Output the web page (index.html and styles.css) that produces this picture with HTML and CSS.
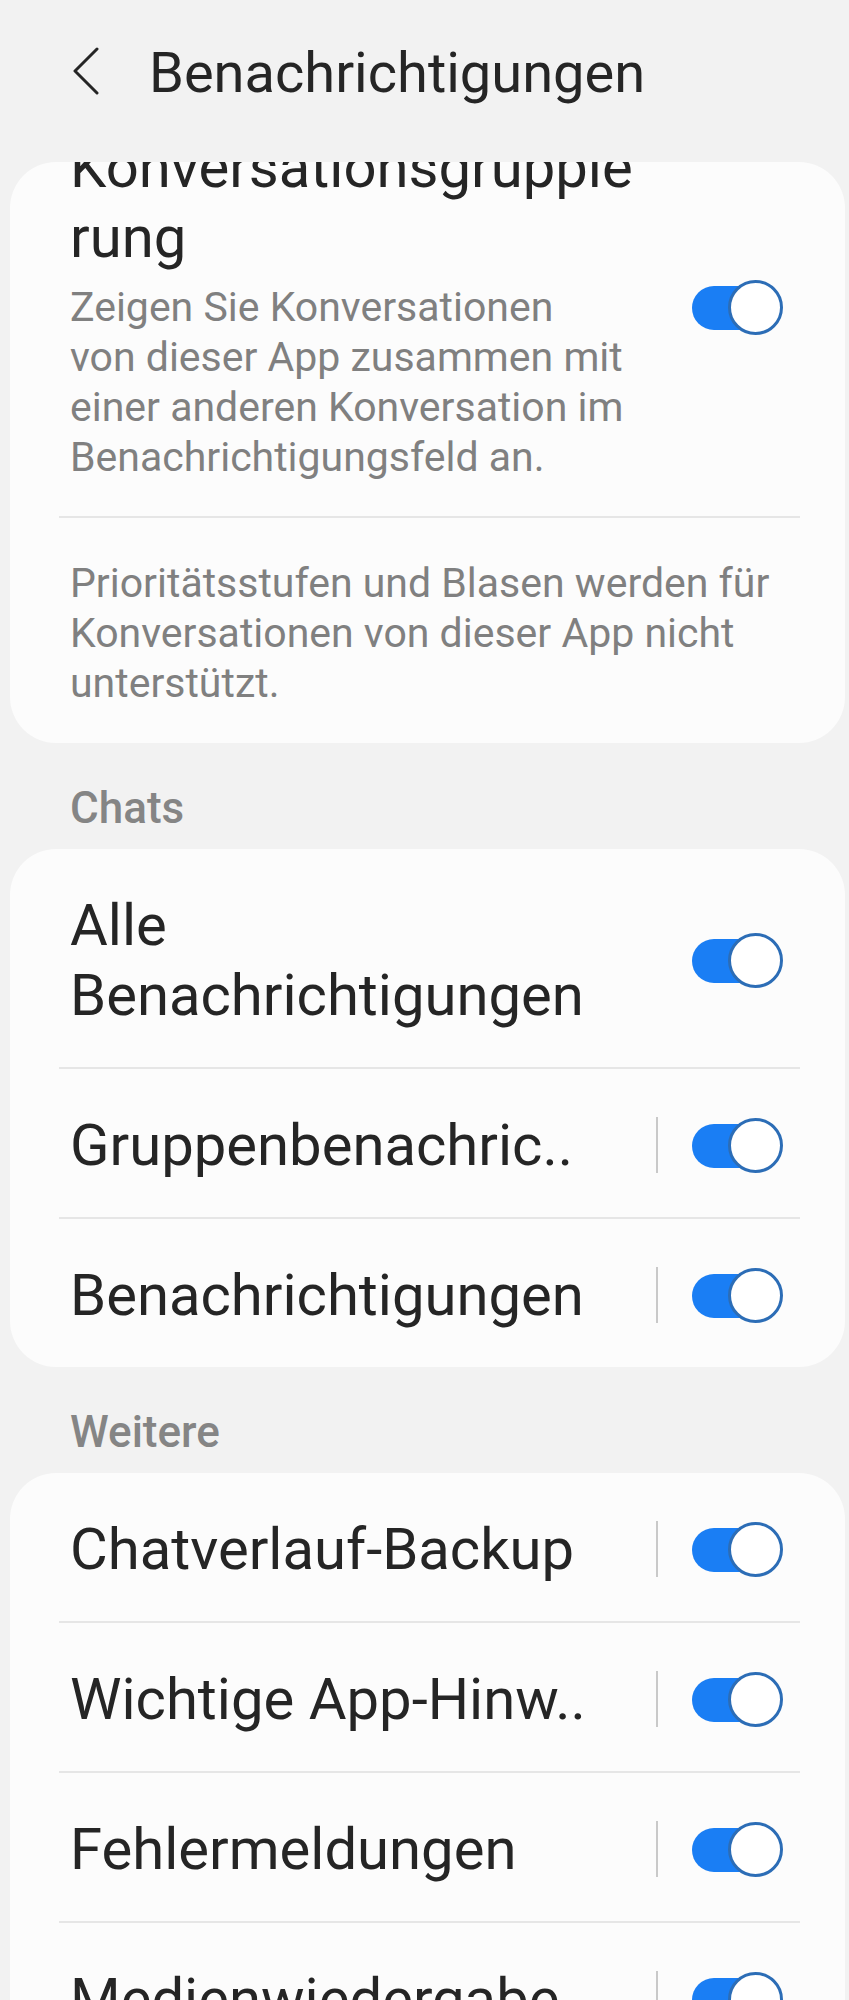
FILE: index.html
```html
<!DOCTYPE html>
<html>
<head>
    <title>Benachrichtigungen</title>
    <link rel="stylesheet" href="styles.css">
</head>
<body>
    <div id="screen">
        <header class="appbar">
            <svg class="back" width="28" height="48" viewBox="0 0 28 48">
                <polyline points="25,2 3,24 25,46" fill="none" stroke="#252525" stroke-width="3" stroke-linecap="round" stroke-linejoin="round"/>
            </svg>
            <h1>Benachrichtigungen</h1>
        </header>

        <section class="card card-first">
            <div class="row row-scrolled">
                <div class="row-text">
                    <div class="title">Konversationsgruppie<br>rung</div>
                    <div class="summary">Zeigen Sie Konversationen<br>von dieser App zusammen mit<br>einer anderen Konversation im<br>Benachrichtigungsfeld an.</div>
                </div>
                <div class="switch"><span class="track"></span><span class="knob"></span></div>
            </div>
            <div class="divider"></div>
            <p class="note">Prioritätsstufen und Blasen werden für<br>Konversationen von dieser App nicht<br>unterstützt.</p>
        </section>

        <h2 class="section-title">Chats</h2>
        <section class="card">
            <div class="row">
                <div class="row-text"><div class="title">Alle<br>Benachrichtigungen</div></div>
                <div class="switch"><span class="track"></span><span class="knob"></span></div>
            </div>
            <div class="divider"></div>
            <div class="row">
                <div class="row-text"><div class="title">Gruppenbenachric..</div></div>
                <span class="vline"></span>
                <div class="switch"><span class="track"></span><span class="knob"></span></div>
            </div>
            <div class="divider"></div>
            <div class="row">
                <div class="row-text"><div class="title">Benachrichtigungen</div></div>
                <span class="vline"></span>
                <div class="switch"><span class="track"></span><span class="knob"></span></div>
            </div>
        </section>

        <h2 class="section-title">Weitere</h2>
        <section class="card">
            <div class="row">
                <div class="row-text"><div class="title">Chatverlauf-Backup</div></div>
                <span class="vline"></span>
                <div class="switch"><span class="track"></span><span class="knob"></span></div>
            </div>
            <div class="divider"></div>
            <div class="row">
                <div class="row-text"><div class="title">Wichtige App-Hinw..</div></div>
                <span class="vline"></span>
                <div class="switch"><span class="track"></span><span class="knob"></span></div>
            </div>
            <div class="divider"></div>
            <div class="row">
                <div class="row-text"><div class="title">Fehlermeldungen</div></div>
                <span class="vline"></span>
                <div class="switch"><span class="track"></span><span class="knob"></span></div>
            </div>
            <div class="divider"></div>
            <div class="row">
                <div class="row-text"><div class="title">Medienwiedergabe</div></div>
                <span class="vline"></span>
                <div class="switch"><span class="track"></span><span class="knob"></span></div>
            </div>
        </section>
    </div>
</body>
</html>
```

FILE: styles.css
```css
body {
    background-color: #f2f2f2;
    margin: 0;
    font-family: Roboto, "Noto Sans", sans-serif;
    color: #252525;
}

.appbar {
    display: flex;
    align-items: center;
    height: 146px;
}

.back {
    margin-left: 72px;
    margin-top: -5px;
}

h1 {
    margin: 0 0 0 49px;
    font-size: 56px;
    font-weight: 400;
    line-height: 66px;
}

.card {
    background-color: #fcfcfc;
    border-radius: 46px;
    margin: 0 4px 0 10px;
    overflow: hidden;
}

.card-first {
    margin-top: 16px;
}

.row {
    display: flex;
    align-items: center;
    padding: 41px 62px 37px 60px;
}

/* list is scrolled, first title is cut by the card edge */
.row-scrolled {
    margin-top: -69px;
    padding-top: 39px;
    padding-bottom: 34px;
}

.row-text {
    flex: 1;
    min-width: 0;
}

.title {
    font-size: 58px;
    line-height: 70px;
    white-space: nowrap;
}

.summary {
    margin-top: 10px;
    font-size: 41px;
    line-height: 50px;
    color: #808080;
    white-space: nowrap;
}

.note {
    margin: 0;
    padding: 40px 40px 35px 60px;
    font-size: 41px;
    line-height: 50px;
    color: #808080;
    white-space: nowrap;
}

.divider {
    height: 2px;
    background-color: #e6e6e6;
    margin: 0 45px 0 49px;
}

.vline {
    width: 2px;
    height: 56px;
    background-color: #c9c9c9;
    margin-right: 34px;
}

.switch {
    position: relative;
    width: 91px;
    height: 55px;
    flex-shrink: 0;
}

.track {
    position: absolute;
    left: 0;
    top: 6px;
    width: 72px;
    height: 44px;
    border-radius: 22px;
    background-color: #1a7ef4;
}

.knob {
    position: absolute;
    right: 0;
    top: 0;
    width: 55px;
    height: 55px;
    box-sizing: border-box;
    border: 3px solid #2c6db6;
    border-radius: 50%;
    background-color: #fff;
}

.section-title {
    margin: 39px 0 15px 70px;
    font-size: 44px;
    font-weight: 500;
    line-height: 52px;
    color: #858585;
}
```
